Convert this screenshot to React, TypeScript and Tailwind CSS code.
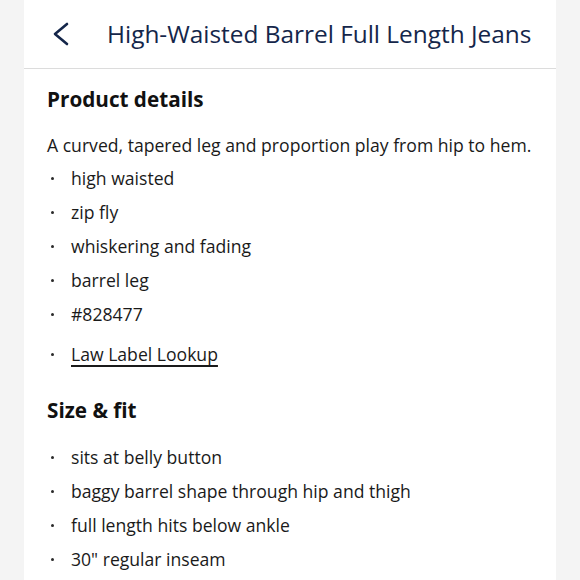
const details = ["high waisted", "zip fly", "whiskering and fading", "barrel leg", "#828477"];
const fit = [
  "sits at belly button",
  "baggy barrel shape through hip and thigh",
  "full length hits below ankle",
  '30" regular inseam',
];

const Dot = () => <span className="ml-[4px] mr-[17px] h-[3px] w-[3px] rounded-full bg-[#2a2a2a]" />;

const Bullet = ({ children }: { children: React.ReactNode }) => (
  <li className="flex h-[34px] items-center">
    <Dot />
    {children}
  </li>
);

export default function App() {
  return (
    <div
      className="h-[580px] w-[580px] overflow-hidden bg-[#f4f4f4]"
      style={{ fontFamily: '"Open Sans", "Liberation Sans", sans-serif' }}
    >
      <div className="ml-[24px] h-full w-[532px] bg-white">
        <header className="flex h-[69px] items-center border-b border-[#dcdcdc]">
          <svg className="ml-[28px]" width="18" height="24" viewBox="0 0 18 24" fill="none">
            <polyline
              points="15,2 3,12 15,22"
              stroke="#14264a"
              strokeWidth="2.6"
              strokeLinecap="round"
              strokeLinejoin="round"
            />
          </svg>
          <h1 className="ml-[37px] text-[24.4px] tracking-[0px] text-[#14264a]">
            High-Waisted Barrel Full Length Jeans
          </h1>
        </header>
        <div className="pl-[23px] text-[17.6px] text-[#1a1a1a]">
          <h2 className="mt-[16px] h-[28px] text-[20.7px] leading-[28px] font-bold text-[#111]">
            Product details
          </h2>
          <p className="mt-[17px] h-[31px] leading-[31px]">
            A curved, tapered leg and proportion play from hip to hem.
          </p>
          <ul>
            {details.map((d) => (
              <Bullet key={d}>{d}</Bullet>
            ))}
            <li className="mt-[6px] flex h-[34px] items-center">
              <Dot />
              <a className="underline decoration-[1.5px] underline-offset-[4px]">Law Label Lookup</a>
            </li>
          </ul>
          <h2 className="mt-[25px] h-[28px] text-[20.7px] leading-[28px] font-bold text-[#111]">Size &amp; fit</h2>
          <ul className="mt-[16px]">
            {fit.map((d) => (
              <Bullet key={d}>{d}</Bullet>
            ))}
          </ul>
        </div>
      </div>
    </div>
  );
}
